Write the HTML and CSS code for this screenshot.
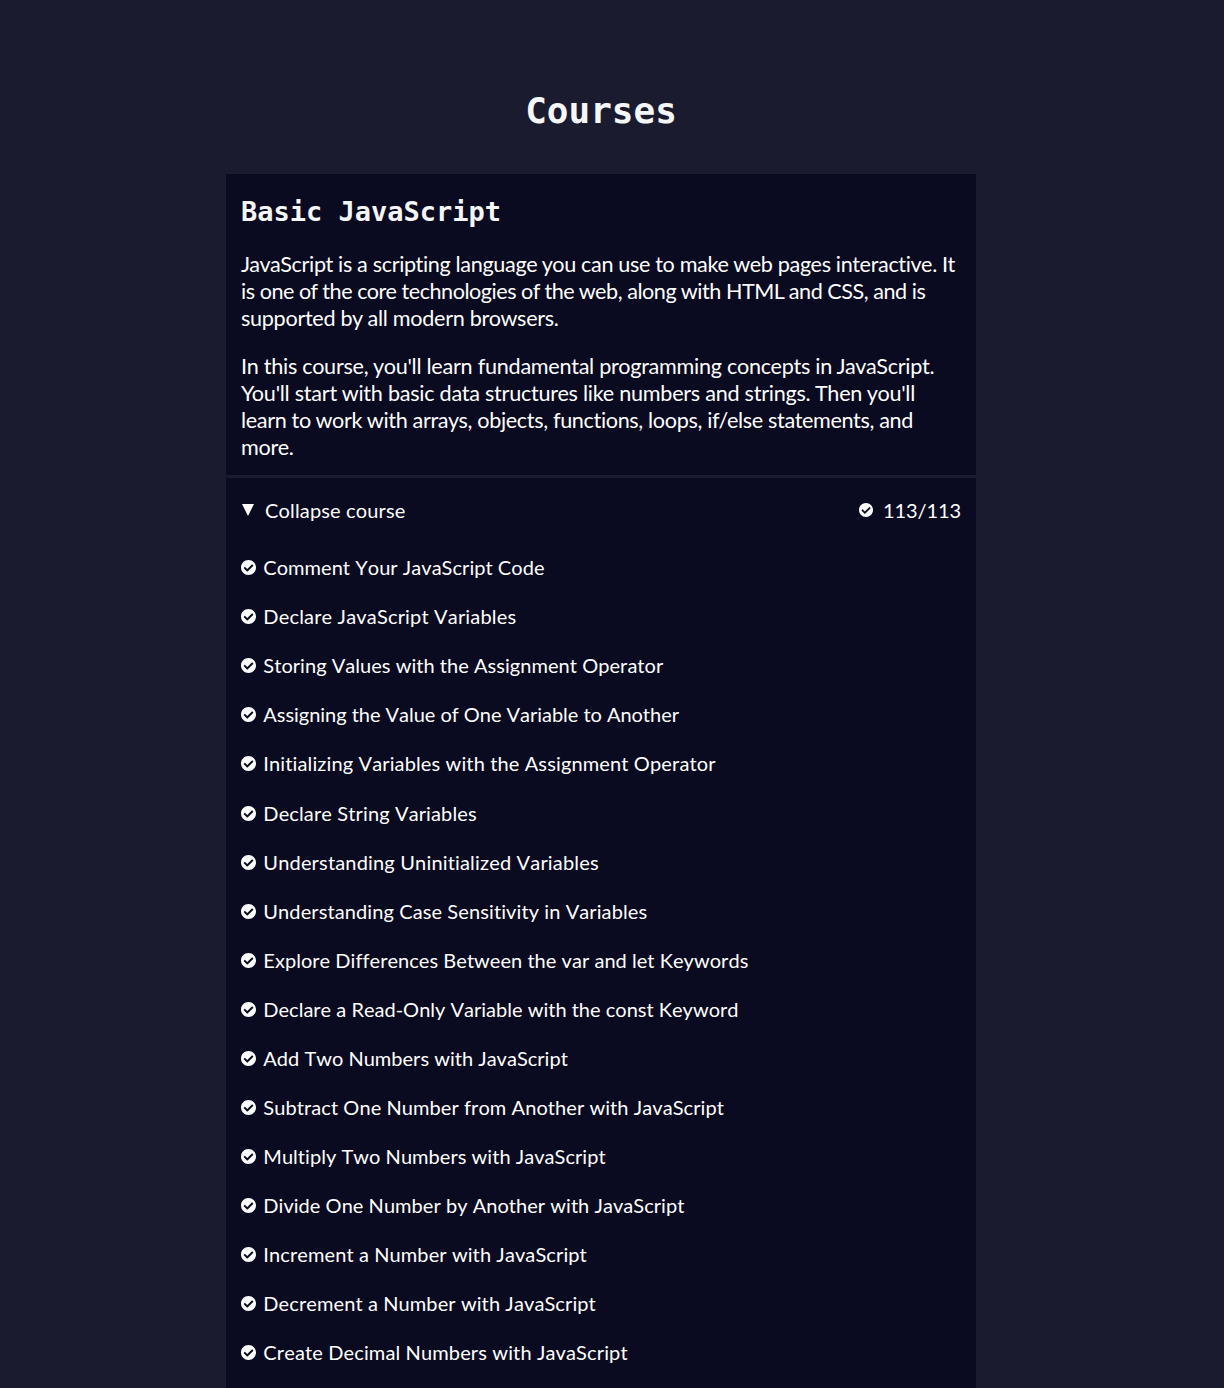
FILE: index.html
```html
<!DOCTYPE html>
<html lang="en">
<head>
<meta charset="utf-8">
<title>Courses</title>
<link rel="stylesheet" href="styles.css">
</head>
<body>
<svg class="defs" width="0" height="0" aria-hidden="true">
  <symbol id="check" viewBox="8 8 496 496"><path fill="currentColor" d="M504 256c0 136.967-111.033 248-248 248S8 392.967 8 256 119.033 8 256 8s248 111.033 248 248zM227.314 387.314l184-184c6.248-6.248 6.248-16.379 0-22.627l-22.627-22.627c-6.248-6.249-16.379-6.249-22.628 0L216 308.118l-70.059-70.059c-6.248-6.248-16.379-6.248-22.628 0l-22.627 22.627c-6.248 6.248-6.248 16.379 0 22.627l104 104c6.249 6.249 16.379 6.249 22.628.001z"/></symbol>
</svg>
<main class="page">
  <h1 class="title">Courses</h1>
  <section class="intro">
    <h2 class="course-name">Basic JavaScript</h2>
    <p><span class="snug">JavaScript is a scripting language you can use to make web pages interactive. It</span> <span class="tight">is one of the core technologies of the web, along with HTML and CSS, and is</span> supported by all modern browsers.</p>
    <p><span class="loose">In this course, you'll learn fundamental programming concepts in JavaScript. You'll start with basic data structures like numbers and strings. Then you'll</span> <span class="snug">learn to work with arrays, objects, functions, loops, if/else statements, and</span> <span class="loose">more.</span></p>
  </section>
  <section class="course">
    <div class="toggle">
      <svg class="arrow" viewBox="0 0 12 12"><path fill="currentColor" d="M0 0h12L6 12z"/></svg>
      <span class="label">Collapse course</span>
      <span class="progress"><svg class="check check-small"><use href="#check"/></svg><span class="count">113/113</span></span>
    </div>
    <ul class="lessons">
      <li><svg class="check"><use href="#check"/></svg><span>Comment Your JavaScript Code</span></li>
      <li><svg class="check"><use href="#check"/></svg><span>Declare JavaScript Variables</span></li>
      <li><svg class="check"><use href="#check"/></svg><span>Storing Values with the Assignment Operator</span></li>
      <li><svg class="check"><use href="#check"/></svg><span>Assigning the Value of One Variable to Another</span></li>
      <li><svg class="check"><use href="#check"/></svg><span>Initializing Variables with the Assignment Operator</span></li>
      <li><svg class="check"><use href="#check"/></svg><span>Declare String Variables</span></li>
      <li><svg class="check"><use href="#check"/></svg><span>Understanding Uninitialized Variables</span></li>
      <li><svg class="check"><use href="#check"/></svg><span>Understanding Case Sensitivity in Variables</span></li>
      <li><svg class="check"><use href="#check"/></svg><span>Explore Differences Between the var and let Keywords</span></li>
      <li><svg class="check"><use href="#check"/></svg><span>Declare a Read-Only Variable with the const Keyword</span></li>
      <li><svg class="check"><use href="#check"/></svg><span>Add Two Numbers with JavaScript</span></li>
      <li><svg class="check"><use href="#check"/></svg><span>Subtract One Number from Another with JavaScript</span></li>
      <li><svg class="check"><use href="#check"/></svg><span>Multiply Two Numbers with JavaScript</span></li>
      <li><svg class="check"><use href="#check"/></svg><span>Divide One Number by Another with JavaScript</span></li>
      <li><svg class="check"><use href="#check"/></svg><span>Increment a Number with JavaScript</span></li>
      <li><svg class="check"><use href="#check"/></svg><span>Decrement a Number with JavaScript</span></li>
      <li><svg class="check"><use href="#check"/></svg><span>Create Decimal Numbers with JavaScript</span></li>
    </ul>
  </section>
</main>
</body>
</html>
```
FILE: styles.css
```css
* { box-sizing: border-box; }
body {
  margin: 0;
  height: 1388px;
  overflow: hidden;
  background: #1b1b2f;
  color: #fff;
  font-family: Lato, sans-serif;
  font-variant-ligatures: none;
}
.defs { display: none; }
.page {
  width: 750px;
  height: 1388px;
  margin-left: 226px;
  padding-top: 90px;
  display: flex;
  flex-direction: column;
}
.title, .course-name {
  margin: 0;
  font-family: "DejaVu Sans Mono", monospace;
  font-weight: 700;
  color: #f5f6f7;
}
.title {
  font-size: 36px;
  line-height: 42px;
  text-align: center;
  margin-bottom: 42px;
}
.intro {
  height: 301px;
  padding: 22px 15px 0;
  background: #0a0a20;
}
.course-name {
  font-size: 27px;
  line-height: 32px;
  margin-bottom: 23px;
}
.intro p {
  margin: 0 0 21px;
  font-size: 21.6px;
  line-height: 27px;
  letter-spacing: -0.29px;
}
.intro .snug { letter-spacing: -0.345px; }
.intro .tight { letter-spacing: -0.47px; }
.intro .loose { letter-spacing: -0.255px; }
.course {
  flex: 1;
  margin-top: 3px;
  padding: 0 15px;
  background: #0a0a20;
  font-size: 20px;
  font-kerning: none;
}
.toggle {
  display: flex;
  align-items: center;
  height: 63.72px;
  margin-bottom: 1.06px;
}
.arrow {
  width: 12px;
  height: 12px;
  margin: 0 11px 0 1px;
}
.label { letter-spacing: 0.16px; }
.progress {
  display: flex;
  align-items: center;
  gap: 10px;
  margin-left: auto;
}
.count { letter-spacing: -0.1px; }
.lessons {
  margin: 0;
  padding: 0;
  list-style: none;
}
.lessons li {
  display: flex;
  align-items: center;
  gap: 7.3px;
  height: 49.06px;
  letter-spacing: 0.04px;
}
.lessons li:nth-child(4) { letter-spacing: -0.03px; }
.lessons li:nth-child(10),
.lessons li:nth-child(11) { letter-spacing: 0.01px; }
.lessons li:nth-child(12) { letter-spacing: 0.07px; }
.lessons li:nth-child(8),
.lessons li:nth-child(15),
.lessons li:nth-child(16) { letter-spacing: 0.1px; }
.lessons li:nth-child(5),
.lessons li:nth-child(6),
.lessons li:nth-child(17) { letter-spacing: 0.13px; }
.lessons li:nth-child(2),
.lessons li:nth-child(7) { letter-spacing: 0.17px; }
.check {
  width: 15px;
  height: 15px;
}
.lessons .check { margin-top: 0.96px; }
.check-small {
  width: 14px;
  height: 14px;
}
```
